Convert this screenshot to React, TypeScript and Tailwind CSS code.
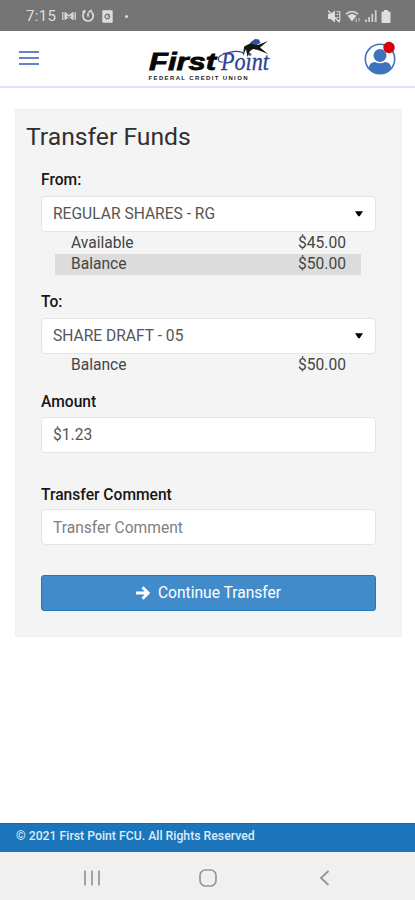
import type { ReactNode } from 'react';

interface BalanceRow {
  label: string;
  amount: string;
  highlighted?: boolean;
}

const fromBalances: BalanceRow[] = [
  { label: 'Available', amount: '$45.00' },
  { label: 'Balance', amount: '$50.00', highlighted: true },
];

const toBalances: BalanceRow[] = [{ label: 'Balance', amount: '$50.00' }];

const StatusBar = () => (
  <div className="h-[31px] shrink-0 bg-[#757575] flex items-center justify-between pl-[26px] pr-[24px] text-[#dedede]">
    <div className="flex items-center pt-px">
      <span className="text-[15px] leading-none w-[36px] tracking-[0.3px]">7:15</span>
      <svg width="14" height="12" viewBox="0 0 14 12" fill="none" stroke="currentColor" strokeWidth="1.2">
        <path d="M.8 2v8M3 2.5v7M3 2.5l8 7M3 9.5l8-7M11 2.5v7M13.2 2v8" />
        <path d="M4 4.5v3M10 4.5v3" strokeWidth="2" />
      </svg>
      <svg className="ml-[5px]" width="14" height="14" viewBox="0 0 14 14" fill="none" stroke="currentColor" strokeWidth="1.7">
        <path d="M4 2.6a5.2 5.2 0 1 0 6.6.4M7 7.8V4M7.5 3.2l3.5-2M1.5 3l3-1.5" />
      </svg>
      <svg className="ml-[7px]" width="11" height="13" viewBox="0 0 11 13">
        <rect x="0.3" y="0.3" width="10.4" height="12.4" rx="0.8" fill="currentColor" />
        <circle cx="5.3" cy="6.5" r="2.3" fill="none" stroke="#757575" strokeWidth="1.3" />
        <circle cx="6" cy="6" r="0.8" fill="#757575" />
      </svg>
      <span className="ml-[12px] size-[3px] rounded-full bg-[#dedede]" />
    </div>
    <div className="flex items-center gap-[4px] pt-px">
      <svg width="14" height="13" viewBox="0 0 14 13" fill="currentColor">
        <path d="M1 4h2.5L8 .5v12L3.5 9H1z" />
        <path d="M1 .8l11.5 11.5" fill="none" stroke="currentColor" strokeWidth="1.3" />
        <path d="M9.5 1.8h3.3v9H10M9.5 4.5h2M9.5 7.5h2" fill="none" stroke="currentColor" strokeWidth="1.1" />
      </svg>
      <svg width="16" height="13" viewBox="0 0 16 13" fill="none" stroke="currentColor" strokeWidth="1.5">
        <path d="M.8 4.2Q7-1.3 13.2 4.2" />
        <path d="M2.5 5.8Q7 2.3 11.5 5.8L7 11.5z" fill="currentColor" stroke="none" />
        <path d="M11.3 8v3.8l-1.4-1.4M13.9 12V8.3l1.4 1.4" strokeWidth="0.9" opacity="0.7" />
      </svg>
      <svg width="12" height="12" viewBox="0 0 12 12" fill="currentColor">
        <path d="M0 9.5h1.8V12H0zM3.2 7H5v5H3.2zM6.4 3.8h1.8V12H6.4zM9.8 0h1.8v12H9.8z" opacity="0.85" />
      </svg>
      <svg width="10" height="13" viewBox="0 0 10 13" fill="currentColor">
        <path d="M3 0h4v1.5h1.5q1 0 1 1V12q0 1-1 1h-7q-1 0-1-1V2.5q0-1 1-1H3z" />
      </svg>
    </div>
  </div>
);

const Logo = () => (
  <svg width="140" height="54" viewBox="0 0 140 54">
    <text
      x="9"
      y="37.3"
      fontFamily="'Liberation Sans', sans-serif"
      fontSize="24"
      fontWeight="700"
      fontStyle="italic"
      textLength="67"
      lengthAdjust="spacingAndGlyphs"
      fill="#080808"
      stroke="#080808"
      strokeWidth="0.8"
    >
      First
    </text>
    <text
      x="81"
      y="37.3"
      fontFamily="'Liberation Serif', serif"
      fontSize="24.5"
      fontStyle="italic"
      textLength="48"
      lengthAdjust="spacingAndGlyphs"
      fill="#2c4494"
      stroke="#2c4494"
      strokeWidth="0.3"
    >
      Point
    </text>
    {/* swash around the P */}
    <path d="M83 29C77 29 76 24 84 21C92 18 101 17 104 21" fill="none" stroke="#2c4494" strokeWidth="1.2" />
    <text
      x="8.5"
      y="46.6"
      fontFamily="'Liberation Sans', sans-serif"
      fontSize="6"
      fontWeight="700"
      textLength="99"
      lengthAdjust="spacing"
      fill="#222222"
    >
      FEDERAL CREDIT UNION
    </text>
    {/* leaping figure */}
    <path
      d="M105 13l6-3 7 2 10-4-8 6.5 8 6.5-10-4-5-1-3 2-2.5 6-1.5-8-3 7 1-9z"
      fill="#151515"
    />
    <path d="M110 9.5l3-2 2-1.5 4 .5 1.5 3.5-4 2-4-1z" fill="#2f5296" />
  </svg>
);

const Header = () => (
  <header className="h-[57px] shrink-0 border-b-2 border-[#e0e4f4] bg-white flex items-start justify-between">
    <div className="w-[140px] pl-[19px] pt-[20px] flex flex-col gap-[4px]">
      <span className="w-[20px] h-[2px] bg-[#6583c6]" />
      <span className="w-[20px] h-[2px] bg-[#6583c6]" />
      <span className="w-[20px] h-[2px] bg-[#6583c6]" />
    </div>
    <div className="pt-[2px]">
      <Logo />
    </div>
    <div className="w-[135px] flex justify-end pr-[17px] pt-[10px]">
      <svg width="36" height="36" viewBox="0 0 36 36">
        <circle cx="18" cy="18" r="14.7" fill="#ffffff" stroke="#3f73bd" strokeWidth="1.6" />
        <circle cx="18" cy="14.5" r="6.5" fill="#3f73bd" />
        <path d="M7 27.5Q7 21 13 21q5 2.5 10 0 6 0 6 6.5A14.5 14.5 0 0 1 7 27.5z" fill="#3f73bd" />
        <circle cx="27" cy="6.5" r="5.7" fill="#d4000b" />
      </svg>
    </div>
  </header>
);

const Label = ({ children }: { children: ReactNode }) => (
  <div className="h-[22px] pt-px text-[15.6px] leading-[22px] font-medium text-[#161616]">{children}</div>
);

const SelectBox = ({ value }: { value: string }) => (
  <div className="h-[36px] rounded-[4px] border border-[#e5e5e5] bg-white flex items-center justify-between pl-[11px] pr-[12px] text-[15.6px] text-[#555555]">
    <span className="pt-px">{value}</span>
    <svg width="8" height="6" viewBox="0 0 9 6" fill="#000000">
      <path d="M0 0h9L5.3 5.5H3.7z" />
    </svg>
  </div>
);

const Balances = ({ rows }: { rows: BalanceRow[] }) => (
  <div className="ml-[14px] mr-[15px]">
    {rows.map((row, index) => (
      <div
        key={index}
        className={`h-[21.5px] pl-[16px] pr-[15px] flex items-center justify-between text-[15.6px] leading-none text-[#454545] ${
          row.highlighted ? 'bg-[#dcdcdc] pt-px' : 'pt-[2px]'
        }`}
      >
        <span>{row.label}</span>
        <span>{row.amount}</span>
      </div>
    ))}
  </div>
);

const TransferForm = () => (
  <section className="mx-[15px] w-[387px] h-[528px] bg-[#f4f4f4] border border-t-2 border-[#efefef] pl-[25px] pr-[25px]">
    <h1 className="-ml-[15px] pt-[10px] h-[57px] text-[24.7px] leading-[32px] text-[#303030]">
      Transfer Funds
    </h1>

    <Label>From:</Label>
    <div className="mt-[6px]">
      <SelectBox value="REGULAR SHARES - RG" />
    </div>
    <Balances rows={fromBalances} />

    <div className="mt-[15px]">
      <Label>To:</Label>
    </div>
    <div className="mt-[6px]">
      <SelectBox value="SHARE DRAFT - 05" />
    </div>
    <Balances rows={toBalances} />

    <div className="mt-[14px]">
      <Label>Amount</Label>
    </div>
    <input
      defaultValue="$1.23"
      className="mt-[5px] block w-full h-[36px] rounded-[4px] border border-[#e5e5e5] bg-white px-[11px] text-[15.6px] text-[#555555]"
    />

    <div className="mt-[30px]">
      <Label>Transfer Comment</Label>
    </div>
    <input
      placeholder="Transfer Comment"
      className="mt-[4px] block w-full h-[36px] rounded-[4px] border border-[#e5e5e5] bg-white px-[11px] pt-[2px] text-[15.6px] placeholder:text-[#808080]"
    />

    <button className="mt-[30px] w-full h-[36px] rounded-[3px] border border-[#1f7cba] bg-[#428bca] flex items-center justify-center gap-[8px] text-[15.6px] text-white">
      <svg width="14" height="14" viewBox="0 0 14 14" fill="none" stroke="currentColor" strokeWidth="2.8">
        <path d="M0 7h11.5M6.5 1.2L12.2 7l-5.7 5.8" />
      </svg>
      <span className="pt-[2px]">Continue Transfer</span>
    </button>
  </section>
);

const NavBar = () => (
  <nav className="h-[48px] shrink-0 bg-[#f0f0f0] flex items-center justify-between pl-[84px] pr-[85px] pt-[4px]">
    <svg width="16" height="16" viewBox="0 0 16 16" stroke="#969696" strokeWidth="1.7">
      <path d="M1 .5v15M8 .5v15M15 .5v15" />
    </svg>
    <svg className="-ml-[3px]" width="18" height="18" viewBox="0 0 18 18" fill="none" stroke="#969696" strokeWidth="1.7">
      <rect x="1" y="1" width="16" height="16" rx="5.5" />
    </svg>
    <svg width="12" height="16" viewBox="0 0 12 16" fill="none" stroke="#969696" strokeWidth="1.8">
      <path d="M10.5 1L3 8l7.5 7" />
    </svg>
  </nav>
);

export default function App() {
  return (
    <div className="w-[415px] h-[900px] flex flex-col bg-white overflow-hidden font-[Roboto,sans-serif]">
      <StatusBar />
      <Header />
      <main className="flex-1 pt-[21px]">
        <TransferForm />
      </main>
      <footer className="h-[29px] shrink-0 bg-[#1c74bb] border-t border-[#1668ac] px-[16px] pt-[4px] text-[12.25px] leading-[16px] font-medium text-[#dcecf8]">
        © 2021 First Point FCU. All Rights Reserved
      </footer>
      <NavBar />
    </div>
  );
}
